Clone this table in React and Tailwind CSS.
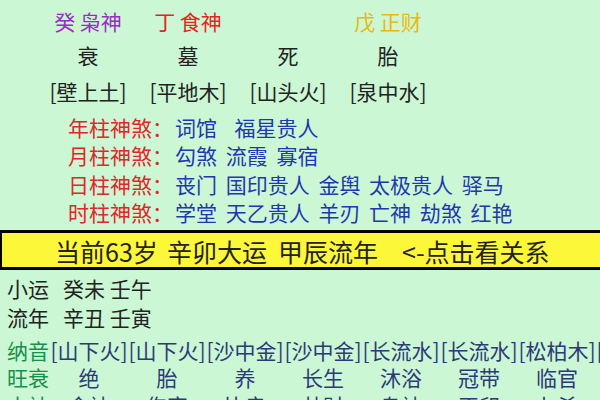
export default function App() {
  const shensha = [
    ["年柱神煞：", "词馆  福星贵人"],
    ["月柱神煞：", "勾煞 流霞 寡宿"],
    ["日柱神煞：", "丧门 国印贵人 金舆 太极贵人 驿马"],
    ["时柱神煞：", "学堂 天乙贵人 羊刃 亡神 劫煞 红艳"],
  ];
  const nayin = ["山下火", "山下火", "沙中金", "沙中金", "长流水", "长流水", "松柏木", "松柏木"];
  const wangshuai = ["绝", "胎", "养", "长生", "沐浴", "冠带", "临官"];
  const shishen = ["食神", "伤官", "比肩", "劫财", "枭神", "正印", "七杀"];

  return (
    <div
      className="h-[400px] w-[600px] overflow-hidden bg-[#cbf7d4] text-[#222]"
      style={{ fontFamily: '"Noto Sans CJK SC", "Noto Sans", sans-serif' }}
    >
      <div className="grid grid-cols-[100px_100px_100px_100px] pl-[38px] pt-[3px] text-[21px] leading-none">
        <div className="flex h-[36px] items-center justify-center text-[#9a2bc4]">癸 枭神</div>
        <div className="flex h-[36px] items-center justify-center text-[#e8231f]">丁 食神</div>
        <div className="h-[36px]" />
        <div className="flex h-[36px] items-center justify-center text-[#eab90c]">戊 正财</div>

        <div className="flex h-[32px] items-center justify-center">衰</div>
        <div className="flex h-[32px] items-center justify-center">墓</div>
        <div className="flex h-[32px] items-center justify-center">死</div>
        <div className="flex h-[32px] items-center justify-center">胎</div>

        <div className="flex h-[40px] items-center justify-center">[壁上土]</div>
        <div className="flex h-[40px] items-center justify-center">[平地木]</div>
        <div className="flex h-[40px] items-center justify-center">[山头火]</div>
        <div className="flex h-[40px] items-center justify-center">[泉中水]</div>
      </div>

      <div className="mt-[2px] pl-[68px] text-[21px] leading-none">
        {shensha.map(([label, value]) => (
          <div key={label} className="flex h-[28.5px] items-center whitespace-pre">
            <span className="text-[#e0262a]">{label}</span>
            <span className="pl-[2px] text-[#1f37b0] [word-spacing:4px]">{value}</span>
          </div>
        ))}
      </div>

      <div className="mt-[3px] flex h-[40px] items-center border-y-[3px] border-l-[2px] border-black bg-[#fdf73a] pl-[53px] pt-[2px] text-[25px] leading-none whitespace-nowrap">
        <span className="w-[112px] shrink-0">当前63岁</span>
        <span className="w-[111px] shrink-0">辛卯大运</span>
        <span className="w-[124px] shrink-0">甲辰流年</span>
        <span>{"<-"}点击看关系</span>
      </div>

      <div className="pl-[7px] text-[21px] leading-none">
        <div className="mt-[4px] flex h-[29px] items-center whitespace-pre">小运   癸未 壬午</div>
        <div className="flex h-[29px] items-center whitespace-pre">流年   辛丑 壬寅</div>

        <div className="mt-[4px] flex h-[28px] items-center whitespace-nowrap">
          <span className="w-[43px] shrink-0 text-[#17914a]">纳音</span>
          {nayin.map((n, i) => (
            <span key={i} className="w-[78px] shrink-0 text-center text-[#2b3a78]">[{n}]</span>
          ))}
        </div>
        <div className="flex h-[27px] items-center whitespace-nowrap">
          <span className="w-[43px] shrink-0 text-[#17914a]">旺衰</span>
          {wangshuai.map((n, i) => (
            <span key={i} className="w-[78px] shrink-0 text-center text-[#2b3a78]">{n}</span>
          ))}
        </div>
        <div className="flex h-[28px] items-center whitespace-nowrap">
          <span className="w-[43px] shrink-0 text-[#17914a]">十神</span>
          {shishen.map((n, i) => (
            <span key={i} className="w-[78px] shrink-0 text-center text-[#2b3a78]">{n}</span>
          ))}
        </div>
      </div>
    </div>
  );
}
